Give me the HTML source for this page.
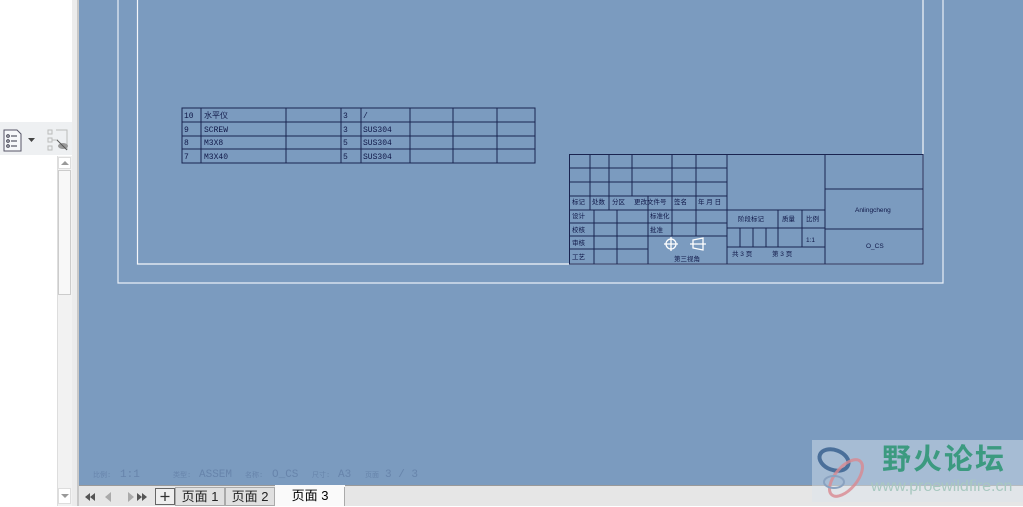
<!DOCTYPE html>
<html><head><meta charset="utf-8"><style>
body{margin:0;width:1023px;height:506px;overflow:hidden;position:relative;background:#fff;font-family:"Liberation Sans","Noto Sans CJK SC",sans-serif}
.abs{position:absolute}
</style></head><body>
<div class="abs" style="left:0;top:0;width:72px;height:506px;background:#fff"></div>
<div class="abs" style="left:0;top:122px;width:72px;height:33px;background:#eef0f2"></div>
<svg class="abs" style="left:0;top:122px" width="72" height="34">
 <path d="M4 8h13l4 4v17H4z" fill="#f6f8fa" stroke="#556" stroke-width="1"/>
 <g fill="none" stroke="#334" stroke-width="1"><circle cx="8" cy="14" r="1.3"/><circle cx="8" cy="19" r="1.3"/><circle cx="8" cy="24" r="1.3"/><path d="M11 14h6M11 19h6M11 24h6"/></g>
 <path d="M28 16h7l-3.5 4z" fill="#444"/>
 <g fill="none" stroke="#bbb"><rect x="48" y="8" width="4" height="4"/><rect x="48" y="16" width="4" height="4"/><rect x="48" y="24" width="4" height="4"/><path d="M52 18h6M56 8h11v20"/></g>
 <ellipse cx="63" cy="24" rx="5" ry="3" fill="#999"/><path d="M57 18l10 10" stroke="#555"/>
</svg>
<div class="abs" style="left:57px;top:156px;width:15px;height:350px;background:#f2f2f2;border-left:1px solid #ddd"></div>
<div class="abs" style="left:58px;top:157px;width:13px;height:12px;background:#fff;border:1px solid #ddd;box-sizing:border-box"></div>
<svg class="abs" style="left:60px;top:159px" width="10" height="8"><path d="M1 6h8L5 2z" fill="#999"/></svg>
<div class="abs" style="left:58px;top:170px;width:13px;height:125px;background:#f8f8f8;border:1px solid #ccc;box-sizing:border-box"></div>
<div class="abs" style="left:58px;top:488px;width:13px;height:16px;background:#fff;border:1px solid #ddd;box-sizing:border-box"></div>
<svg class="abs" style="left:60px;top:492px" width="10" height="8"><path d="M1 2h8L5 6z" fill="#999"/></svg>
<div class="abs" style="left:72px;top:0;width:5px;height:506px;background:#ececec"></div>
<div class="abs" style="left:77px;top:0;width:2px;height:506px;background:#c8c8c8"></div>
<div class="abs" style="left:79px;top:0;width:944px;height:485px;background:#7b9bbf"></div>
<svg class="abs" style="left:0;top:0" width="1023" height="485" font-family="Liberation Sans, Noto Sans CJK SC, sans-serif">
 <path d="M118 0V283H943V0" fill="none" stroke="#e8eef6" stroke-width="1.2"/>
 <path d="M137.5 0V264H923V0" fill="none" stroke="#f4f6fa" stroke-width="1.2"/>
 <g stroke="#1a2450" stroke-width="1" fill="none">
  <rect x="182" y="108" width="353" height="55"/>
  <path d="M182 122H535M182 136H535M182 149H535"/>
  <path d="M201 108V163M286 108V163M341 108V163M361 108V163M410 108V163M453 108V163M497 108V163"/>
 </g>
 <g font-size="8" fill="#101848" font-family="Liberation Mono, Noto Sans CJK SC, monospace">
  <text x="184" y="118">10</text><text x="204" y="118">水平仪</text><text x="343" y="118">3</text><text x="363" y="118">/</text>
  <text x="184" y="132">9</text><text x="204" y="132">SCREW</text><text x="343" y="132">3</text><text x="363" y="132">SUS304</text>
  <text x="184" y="145">8</text><text x="204" y="145">M3X8</text><text x="343" y="145">5</text><text x="363" y="145">SUS304</text>
  <text x="184" y="159">7</text><text x="204" y="159">M3X40</text><text x="343" y="159">5</text><text x="363" y="159">SUS304</text>
 </g>
 <g stroke="#1a2450" stroke-width="1" fill="none">
  <rect x="569.5" y="154.5" width="353.5" height="109.5"/>
  <path d="M727 154V264M825 154V264"/>
  <path d="M569 168H727M569 182H727M569 196H727M569 210H727M569 223H727M569 236H727M569 249H648"/>
  <path d="M590 154V210M609 154V210M632 154V196M672 154V236M696 154V236"/>
  <path d="M594 210V264M617 210V264M648 196V264"/>
  <path d="M727 210H825M727 228H825M727 247H825"/>
  <path d="M778 210V247M802 210V247M740 228V247M753 228V247M766 228V247"/>
  <path d="M825 189H923M825 229H923"/>
 </g>
 <g font-size="6.5" fill="#101848">
  <text x="572" y="204">标记</text><text x="592" y="204">处数</text><text x="612" y="204">分区</text><text x="634" y="204">更改文件号</text><text x="674" y="204">签名</text><text x="698" y="204">年 月 日</text>
  <text x="572" y="218">设计</text><text x="572" y="232">校核</text><text x="572" y="245">审核</text><text x="572" y="259">工艺</text>
  <text x="650" y="218">标准化</text><text x="650" y="232">批准</text>
  <text x="738" y="221">阶段标记</text><text x="782" y="221">质量</text><text x="806" y="221">比例</text>
  <text x="806" y="242">1:1</text>
  <text x="732" y="256">共 3 页</text><text x="772" y="256">第 3 页</text>
  <text x="674" y="261">第三视角</text>
  <text x="855" y="212">Anlingcheng</text>
  <text x="866" y="248">O_CS</text>
 </g>
 <g stroke="#fff" stroke-width="1.3" fill="none">
  <circle cx="671" cy="244" r="5"/><path d="M664 244H678M671 237V251"/>
  <path d="M693 240L703 238V250L693 248ZM690 244H706"/>
 </g>
 <g font-size="11" fill="#6784ab" font-family="Liberation Mono, Noto Sans CJK SC, monospace">
  <text x="93" y="477" font-size="7">比例:</text><text x="120" y="477">1:1</text>
  <text x="173" y="477" font-size="7">类型:</text><text x="199" y="477">ASSEM</text>
  <text x="245" y="477" font-size="7">名称:</text><text x="272" y="477">O_CS</text>
  <text x="312" y="477" font-size="7">尺寸:</text><text x="338" y="477">A3</text>
  <text x="365" y="477" font-size="7">页面</text><text x="385" y="477">3 / 3</text>
 </g>
</svg>
<div class="abs" style="left:79px;top:485px;width:944px;height:21px;background:#e6e6e6;border-top:1px solid #999;box-sizing:border-box"></div>
<svg class="abs" style="left:80px;top:487px" width="100" height="19">
 <g fill="#555"><path d="M5 10l5-4v8zM10 10l5-4v8z"/></g>
 <path d="M25 10l6-5v10z" fill="#aaa"/><path d="M48 5l6 5-6 5z" fill="#aaa"/>
 <g fill="#555"><path d="M57 6l5 4-5 4zM62 6l5 4-5 4z"/></g>
 <rect x="75.5" y="1.5" width="19" height="16" fill="#eee" stroke="#666"/>
 <path d="M85 5v9M80.5 9.5h9" stroke="#333" stroke-width="1.3"/>
</svg>
<div class="abs" style="left:175px;top:487px;width:50px;height:19px;background:#e0e0e0;border:1px solid #aaa;box-sizing:border-box;font-size:13px;line-height:18px;text-align:center;color:#222">页面 1</div>
<div class="abs" style="left:225px;top:487px;width:50px;height:19px;background:#e0e0e0;border:1px solid #aaa;box-sizing:border-box;font-size:13px;line-height:18px;text-align:center;color:#222">页面 2</div>
<div class="abs" style="left:275px;top:485px;width:70px;height:21px;background:#fafafa;font-size:13px;line-height:22px;text-align:center;color:#000">页面 3</div>
<div class="abs" style="left:344px;top:487px;width:1px;height:19px;background:#aaa"></div>
<div class="abs" style="left:812px;top:440px;width:211px;height:62px;background:rgba(220,228,238,0.45);overflow:hidden">
<svg class="abs" style="left:0;top:0" width="70" height="62">
 <ellipse cx="22" cy="20" rx="15" ry="10" fill="none" stroke="#4a6f9a" stroke-width="4" transform="rotate(20 22 20)"/>
 <ellipse cx="34" cy="38" rx="22" ry="11" fill="none" stroke="#d98890" stroke-width="3" transform="rotate(-50 34 38)" opacity="0.8"/>
 <ellipse cx="22" cy="42" rx="10" ry="6" fill="none" stroke="#8aa2c0" stroke-width="2"/>
</svg>
<div class="abs" style="left:70px;top:0;font-size:29px;font-weight:bold;color:#3c9a80;letter-spacing:2px;line-height:40px">野火论坛</div>
<div class="abs" style="left:59px;top:36px;font-size:16px;color:#a8c8c0;line-height:22px;white-space:nowrap">www.proewildfire.cn</div>
</div>
</body></html>
